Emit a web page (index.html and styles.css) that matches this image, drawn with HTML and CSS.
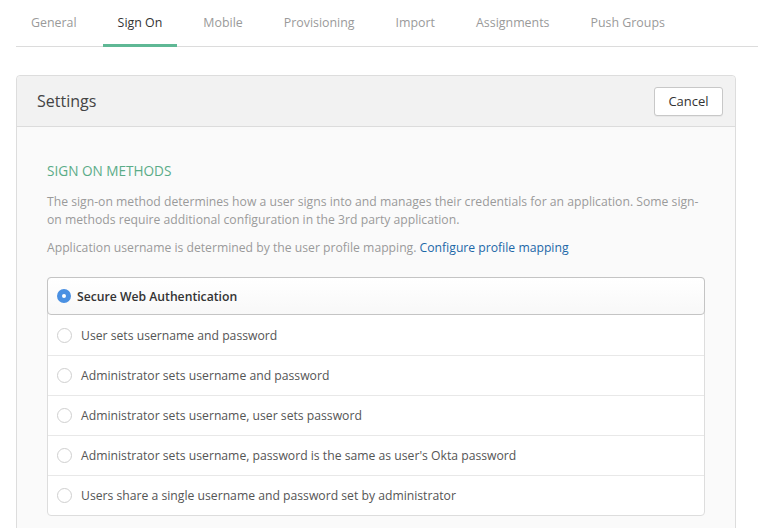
FILE: index.html
```html
<!DOCTYPE html>
<html>
<head>
<meta charset="utf-8">
<link rel="stylesheet" href="styles.css">
</head>
<body>
<nav class="tabs">
  <a class="tab">General</a>
  <a class="tab active">Sign On</a>
  <a class="tab">Mobile</a>
  <a class="tab">Provisioning</a>
  <a class="tab">Import</a>
  <a class="tab">Assignments</a>
  <a class="tab">Push Groups</a>
</nav>
<section class="panel">
  <header class="panel-head">
    <h2 class="panel-title">Settings</h2>
    <button class="btn">Cancel</button>
  </header>
  <div class="panel-body">
    <h3 class="section-title">SIGN ON METHODS</h3>
    <p class="desc">The sign-on method determines how a user signs into and manages their credentials for an application. Some sign-on methods require additional configuration in the 3rd party application.</p>
    <p class="desc">Application username is determined by the user profile mapping. <a class="link">Configure profile mapping</a></p>
    <div class="options">
      <div class="option selected"><span class="radio on"></span><span class="label">Secure Web Authentication</span></div>
      <div class="option"><span class="radio"></span><span class="label">User sets username and password</span></div>
      <div class="option"><span class="radio"></span><span class="label">Administrator sets username and password</span></div>
      <div class="option"><span class="radio"></span><span class="label">Administrator sets username, user sets password</span></div>
      <div class="option"><span class="radio"></span><span class="label">Administrator sets username, password is the same as user's Okta password</span></div>
      <div class="option"><span class="radio"></span><span class="label">Users share a single username and password set by administrator</span></div>
    </div>
  </div>
</section>
</body>
</html>
```
FILE: styles.css
```css
html, body {
  margin: 0;
  padding: 0;
  background: #fff;
  font-family: "Open Sans", "Liberation Sans", sans-serif;
  font-size: 12.2px;
  color: #333;
}
.tabs {
  display: flex;
  gap: 11px;
  margin-left: 16px;
  padding-left: 0;
  border-bottom: 1px solid #dcdcdc;
  height: 47px;
  box-sizing: border-box;
}
.tab {
  display: block;
  padding: 13px 15px 0;
  line-height: 20px;
  color: #9a9a9a;
  font-size: 12.4px;
  box-sizing: border-box;
  height: 47px;
  border-bottom: 3px solid transparent;
}
.tab.active {
  color: #333;
  border-bottom-color: #5fb895;
}
.panel {
  margin: 28px 0 0 16px;
  width: 720px;
  border: 1px solid #ddd;
  border-radius: 4px;
  background: #fafafa;
  box-sizing: border-box;
}
.panel-head {
  display: flex;
  align-items: center;
  justify-content: space-between;
  height: 51px;
  box-sizing: border-box;
  padding: 0 12px 0 20px;
  background: #f2f2f2;
  border-bottom: 1px solid #dcdcdc;
  border-radius: 4px 4px 0 0;
}
.panel-title {
  margin: 0;
  font-size: 16px;
  font-weight: normal;
  color: #444;
}
.btn {
  width: 69px;
  height: 29px;
  background: #fff;
  border: 1px solid #c8c8c8;
  border-radius: 3px;
  font-family: inherit;
  font-size: 13px;
  color: #333;
  padding: 0;
  box-shadow: 0 1px 0 rgba(0,0,0,0.04);
}
.panel-body {
  padding: 35px 30px 40px;
}
.section-title {
  margin: 0 0 13px;
  font-size: 13.6px;
  font-weight: normal;
  color: #5aac88;
  line-height: 18px;
}
.desc {
  margin: 0 0 10px;
  line-height: 18px;
  color: #9a9a9a;
  font-size: 12.2px;
}
.link {
  color: #1d68a8;
}
.options {
  margin-top: 20px;
  border: 1px solid #ddd;
  border-radius: 4px;
  background: #fff;
}
.option {
  display: flex;
  align-items: center;
  height: 40px;
  box-sizing: border-box;
  padding-left: 9px;
  border-top: 1px solid #e8e8e8;
  color: #555;
  font-size: 12.2px;
}
.option:first-child {
  border-top: none;
}
.option.selected {
  height: 38px;
  margin: -1px -1px 0;
  border: 1px solid #c4c4c4;
  border-radius: 4px;
  background: linear-gradient(#fff, #f8f8f8);
  padding-left: 9px;
  color: #333;
  font-weight: 600;
}
.option.selected + .option {
  border-top: none;
}
.radio {
  width: 15px;
  height: 15px;
  box-sizing: border-box;
  border: 1px solid #cfcfcf;
  border-radius: 50%;
  background: #fff;
  flex: none;
}
.radio.on {
  border: 5px solid #4a90e2;
  background: #fff;
  width: 14px;
  height: 14px;
}
.label {
  margin-left: 9px;
}
.option.selected .label {
  margin-left: 6px;
}
```
